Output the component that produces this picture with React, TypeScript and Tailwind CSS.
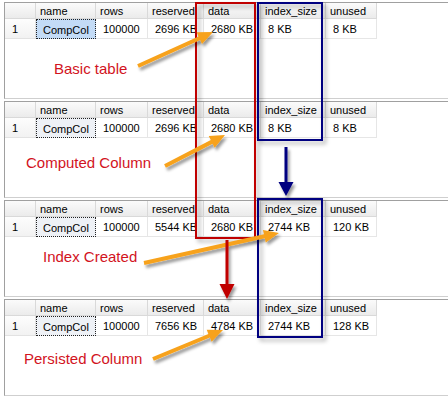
import React from 'react';

type Snapshot = {
  label: string;
  labelClass: string;
  reserved: string;
  data: string;
  index: string;
  unused: string;
  selected?: boolean;
};

const snapshots: Snapshot[] = [
  { label: 'Basic table', labelClass: 'ml-[49px] mt-[22px]', reserved: '2696 KB', data: '2680 KB', index: '8 KB', unused: '8 KB', selected: true },
  { label: 'Computed Column', labelClass: 'ml-[21px] mt-[17px]', reserved: '2696 KB', data: '2680 KB', index: '8 KB', unused: '8 KB' },
  { label: 'Index Created', labelClass: 'ml-[38px] mt-[12px]', reserved: '5544 KB', data: '2680 KB', index: '2744 KB', unused: '120 KB' },
  { label: 'Persisted Column', labelClass: 'ml-[19px] mt-[15px]', reserved: '7656 KB', data: '4784 KB', index: '2744 KB', unused: '128 KB' },
];

const columns = [
  { title: 'name', w: 'w-[60px]' },
  { title: 'rows', w: 'w-[52px]' },
  { title: 'reserved', w: 'w-[56px]' },
  { title: 'data', w: 'w-[57px]' },
  { title: 'index_size', w: 'w-[65px]' },
  { title: 'unused', w: 'w-[51px]' },
];

// polygon for a straight arrow from tail to tip
const arrowPoints = (tx: number, ty: number, px: number, py: number, shaft: number, headLen: number, headW: number) => {
  const len = Math.hypot(px - tx, py - ty);
  const ux = (px - tx) / len;
  const uy = (py - ty) / len;
  const nx = -uy;
  const ny = ux;
  const bx = px - ux * headLen;
  const by = py - uy * headLen;
  const pts = [
    [tx + (nx * shaft) / 2, ty + (ny * shaft) / 2],
    [bx + (nx * shaft) / 2, by + (ny * shaft) / 2],
    [bx + (nx * headW) / 2, by + (ny * headW) / 2],
    [px, py],
    [bx - (nx * headW) / 2, by - (ny * headW) / 2],
    [bx - (nx * shaft) / 2, by - (ny * shaft) / 2],
    [tx - (nx * shaft) / 2, ty - (ny * shaft) / 2],
  ];
  return pts.map((p) => p.map((v) => v.toFixed(1)).join(',')).join(' ');
};

const Panel = ({ s }: { s: Snapshot }) => {
  const values = ['CompCol', '100000', s.reserved, s.data, s.index, s.unused];
  return (
    <section className="h-[99px] pt-[2px]">
      <div className="ml-[4px] h-full border-t border-l border-b border-t-[#a0a0a0] border-l-[#a0a0a0] border-b-[#cfcfcf]">
        {/* header row */}
        <div className="flex h-[16px] leading-[16px]">
          <div className="w-[31px] border-r border-b border-[#d9d9d9] bg-linear-to-b from-[#fbfbfb] to-[#ebebeb]" />
          {columns.map((c) => (
            <div key={c.title} className={`${c.w} border-r border-b border-[#d9d9d9] bg-linear-to-b from-[#fbfbfb] to-[#ebebeb] pl-[4px]`}>
              {c.title}
            </div>
          ))}
        </div>
        {/* data row */}
        <div className="flex h-[20px] leading-[19px]">
          <div className="w-[31px] border-r border-b border-[#e2e2e2] bg-linear-to-b from-[#fdfdfd] to-[#f2f2f2] pl-[7px] pt-[1px]">1</div>
          {columns.map((c, i) => (
            <div
              key={c.title}
              className={
                i === 0
                  ? `${c.w} border border-dotted border-[#222] pl-[6px] pt-[1px] ${s.selected ? 'bg-[#c3dbf6]' : 'bg-[#eef1f6]'}`
                  : `${c.w} border-r border-b border-[#e6e6e6] pl-[7px] pt-[1px] overflow-hidden whitespace-nowrap`
              }
            >
              {values[i]}
            </div>
          ))}
        </div>
        <p className={`${s.labelClass} text-[15px] leading-none text-[#d2131d] font-['Liberation_Sans',Arial,sans-serif]`}>
          {s.label}
        </p>
      </div>
    </section>
  );
};

export default function App() {
  return (
    <div className="relative w-[448px] h-[396px] overflow-hidden bg-white text-[11px] text-black font-['Liberation_Sans',Arial,sans-serif]">
      {snapshots.map((s) => (
        <Panel key={s.label} s={s} />
      ))}

      {/* highlight boxes */}
      <div className="absolute left-[195px] top-[2px] w-[61px] h-[237px] border-2 border-[#c00000] drop-shadow-[3px_3px_2px_rgba(0,0,0,0.35)]" />
      <div className="absolute left-[257px] top-[2px] w-[66px] h-[139px] border-2 border-[#000080] drop-shadow-[3px_3px_2px_rgba(0,0,0,0.35)]" />
      <div className="absolute left-[257px] top-[198px] w-[66px] h-[140px] border-2 border-[#000080] drop-shadow-[3px_3px_2px_rgba(0,0,0,0.35)]" />

      {/* arrows */}
      <svg className="absolute left-0 top-0" width="448" height="396" viewBox="0 0 448 396">
        <defs>
          <filter id="sh" x="-20%" y="-20%" width="140%" height="140%">
            <feDropShadow dx="2" dy="3" stdDeviation="1.5" floodColor="#000" floodOpacity="0.4" />
          </filter>
        </defs>
        <g filter="url(#sh)">
          <polygon points={arrowPoints(138, 66, 213, 32, 4, 15, 13)} fill="#f7a21b" />
          <polygon points={arrowPoints(165, 166, 225, 135, 4, 15, 13)} fill="#f7a21b" />
          <polygon points={arrowPoints(144, 263, 279, 233, 4, 15, 13)} fill="#f7a21b" />
          <polygon points={arrowPoints(153, 359, 223, 330, 4, 15, 13)} fill="#f7a21b" />
          <polygon points={arrowPoints(227, 240, 227, 299, 3, 15, 15)} fill="#c00000" />
          <polygon points={arrowPoints(286, 147, 286, 196, 3, 14, 15)} fill="#000080" />
        </g>
      </svg>
    </div>
  );
}
